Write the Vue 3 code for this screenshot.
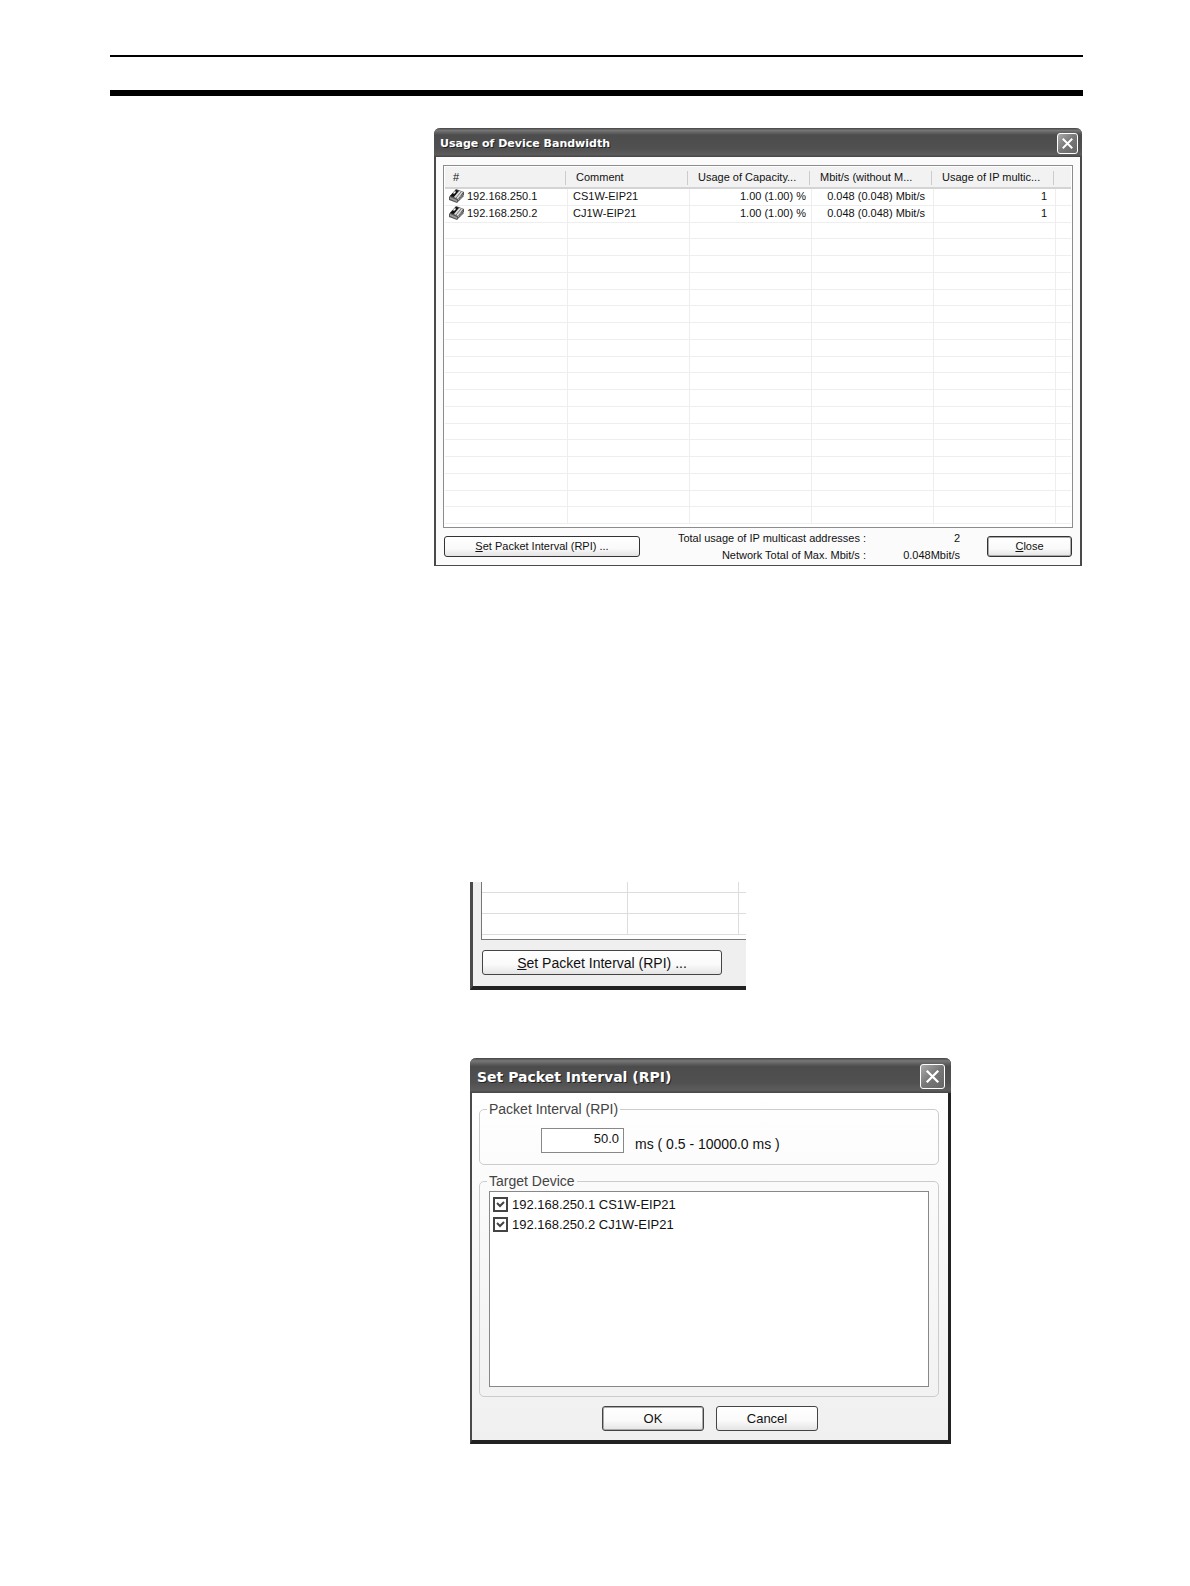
<template>
  <main class="page">
    <header class="page-head"></header>

    <section class="dialog usage">
      <div class="title-bar">
        <h2>Usage of Device Bandwidth</h2>
        <button type="button" class="close-btn" aria-label="Close window">
          <svg viewBox="0 0 20 20"><path d="M5 5 15 15M15 5 5 15" /></svg>
        </button>
      </div>

      <div class="usage-body">
        <div class="list-box">
          <table class="devices">
            <colgroup>
              <col class="col-first" />
              <col v-for="n in 4" :key="n" class="col-mid" />
              <col />
            </colgroup>
            <thead>
              <tr>
                <th v-for="(title, i) in headers" :key="i">{{ title }}</th>
              </tr>
            </thead>
            <tbody>
              <tr v-for="device in devices" :key="device.ip">
                <td class="ip">
                  <div class="ip-cell">
                    <svg class="device-icon" viewBox="0 0 16 14">
                      <path d="M0 8 7 0 15 3 15 7 8 14 0 11Z" fill="#555" />
                      <path d="M1 7 7 1 10 2 5 8Z" fill="#111" />
                      <path d="M5 8 10 2 14 3 9 10Z" fill="#ddd" />
                      <path d="M7 9 12 3" stroke="#777" />
                      <path d="M1 8 8 11 8 13 1 10Z" fill="#999" />
                      <path d="M4 4 6 2 7 3 5 5Z" fill="#fff" />
                      <path d="M9 13 15 6M9 11 14 5" stroke="#ccc" stroke-dasharray="1 1" />
                    </svg>
                    <span>{{ device.ip }}</span>
                  </div>
                </td>
                <td>{{ device.comment }}</td>
                <td class="num">{{ device.capacity }}</td>
                <td class="num rate">{{ device.rate }}</td>
                <td class="num last">{{ device.multicast }}</td>
                <td></td>
              </tr>
              <tr v-for="n in 18" :key="n">
                <td v-for="c in 6" :key="c"></td>
              </tr>
            </tbody>
          </table>
        </div>

        <div class="usage-foot">
          <button type="button" class="btn rpi-btn"><u>S</u>et Packet Interval (RPI) ...</button>
          <dl class="totals">
            <dt>Total usage of IP multicast addresses :</dt>
            <dd>2</dd>
            <dt>Network Total of Max. Mbit/s :</dt>
            <dd>0.048Mbit/s</dd>
          </dl>
          <button type="button" class="btn default close-text"><u>C</u>lose</button>
        </div>
      </div>
    </section>

    <section class="detail">
      <div class="detail-list">
        <table class="detail-grid">
          <colgroup>
            <col class="detail-first" />
            <col class="detail-second" />
            <col />
          </colgroup>
          <tbody>
            <tr v-for="n in 3" :key="n">
              <td v-for="c in 3" :key="c"></td>
            </tr>
          </tbody>
        </table>
      </div>
      <button type="button" class="btn large detail-btn"><u>S</u>et Packet Interval (RPI) ...</button>
    </section>

    <section class="dialog interval">
      <div class="title-bar">
        <h2>Set Packet Interval (RPI)</h2>
        <button type="button" class="close-btn" aria-label="Close window">
          <svg viewBox="0 0 20 20"><path d="M5 5 15 15M15 5 5 15" /></svg>
        </button>
      </div>

      <form class="interval-body" @submit.prevent>
        <fieldset class="group">
          <legend>Packet Interval (RPI)</legend>
          <div class="rpi-row">
            <input id="rpi" v-model="rpi" type="text" />
            <label for="rpi">ms ( 0.5 - 10000.0 ms )</label>
          </div>
        </fieldset>
        <fieldset class="group">
          <legend>Target Device</legend>
          <div class="targets">
            <label v-for="target in targets" :key="target.name" class="target">
              <input v-model="target.checked" type="checkbox" />
              <span>{{ target.name }}</span>
            </label>
          </div>
        </fieldset>
        <div class="actions">
          <button type="submit" class="btn large default">OK</button>
          <button type="button" class="btn large">Cancel</button>
        </div>
      </form>
    </section>
  </main>
</template>

<script setup>
import { ref } from "vue";

const headers = [
  "#",
  "Comment",
  "Usage of Capacity...",
  "Mbit/s (without M...",
  "Usage of IP multic...",
  "",
];

const devices = [
  {
    ip: "192.168.250.1",
    comment: "CS1W-EIP21",
    capacity: "1.00 (1.00) %",
    rate: "0.048 (0.048) Mbit/s",
    multicast: 1,
  },
  {
    ip: "192.168.250.2",
    comment: "CJ1W-EIP21",
    capacity: "1.00 (1.00) %",
    rate: "0.048 (0.048) Mbit/s",
    multicast: 1,
  },
];

const rpi = ref("50.0");
const targets = ref([
  { name: "192.168.250.1 CS1W-EIP21", checked: true },
  { name: "192.168.250.2 CJ1W-EIP21", checked: true },
]);
</script>

<style>
body {
  background: #fff;
}
</style>

<style scoped>
* {
  box-sizing: border-box;
}

.page {
  padding: 55px 107px 142px 110px;
  font-family: "Liberation Sans", Arial, sans-serif;
  font-size: 11px;
  color: #111;
}

.page-head {
  height: 41px;
  border-top: 2px solid #000;
  border-bottom: 6px solid #000;
}

/* dialogs */
.dialog {
  border: 2px solid #4a4a4a;
  border-top: none;
  border-radius: 6px 6px 0 0;
}

.usage {
  margin: 32px 1px 0 324px;
  border-bottom-width: 1px;
}

.title-bar {
  display: flex;
  align-items: center;
  justify-content: space-between;
  height: 29px;
  margin: 0 -2px;
  padding: 2px 4px 0 6px;
  border-radius: 6px 6px 0 0;
  background: linear-gradient(#444, #777 8%, #4c4c4c 24%, #505050 70%, #5c5c5c 92%, #444);
}

.title-bar h2 {
  margin: 0;
  font-family: "DejaVu Sans", Verdana, sans-serif;
  font-size: 11px;
  color: #fff;
  text-shadow: 1px 1px #222;
  white-space: nowrap;
}

.close-btn {
  width: 21px;
  height: 21px;
  padding: 0;
  border: 1px solid #fff;
  border-radius: 3px;
  background: linear-gradient(135deg, #aaa, #777 50%, #666);
}

.close-btn svg {
  display: block;
  width: 100%;
  height: 100%;
  fill: none;
  stroke: #fff;
  stroke-width: 2;
}

.usage-body {
  padding: 8px 7px 1px;
  background: #fbfbfb;
}

.list-box {
  padding: 1px 1px 3px;
  border: 1px solid #8c8c8c;
  background: #fff;
}

/* device table */
.devices {
  width: 100%;
  height: 357px;
  table-layout: fixed;
  border-collapse: separate;
  border-spacing: 0;
  line-height: 14px;
}

.col-first {
  width: 123px;
}

.col-mid {
  width: 122px;
}

.devices th {
  height: 22px;
  padding: 0 0 0 8px;
  border-bottom: 2px solid #d4d4d4;
  background: linear-gradient(#ccc, #ccc) calc(100% - 2px) 4px / 1px 14px no-repeat #f2f2f2;
  font-weight: normal;
  text-align: left;
  white-space: nowrap;
}

.devices th:last-child {
  background: #f2f2f2;
}

.devices td {
  height: 16px;
  padding: 0 5px;
  border-right: 1px solid #eee;
  border-bottom: 1px solid #eee;
  vertical-align: top;
  white-space: nowrap;
}

.devices td:last-child {
  border-right: none;
}

.devices .ip {
  padding: 0 4px;
}

.ip-cell {
  display: flex;
  align-items: center;
  gap: 2px;
}

.device-icon {
  width: 16px;
  height: 14px;
}

.devices .num {
  text-align: right;
}

.devices .rate,
.devices .last {
  padding-right: 8px;
}

/* buttons */
.btn {
  height: 21px;
  padding: 0;
  border: 1px solid #333;
  border-radius: 3px;
  background: linear-gradient(#fff, #fafafa 60%, #e4e4e4);
  color: #111;
  font-family: inherit;
  font-size: 11px;
  white-space: nowrap;
}

.btn.default {
  box-shadow: inset 0 0 0 1px #aaa;
}

.btn.large {
  height: 25px;
  border-color: #444;
  font-size: 14px;
}

.usage-foot {
  display: flex;
  align-items: center;
  padding: 0 1px;
}

.rpi-btn {
  width: 196px;
}

.totals {
  flex: 1;
  display: grid;
  grid-template-columns: 1fr 94px;
  margin: 2px 27px 0 0;
  line-height: 17px;
  text-align: right;
  white-space: nowrap;
}

.totals dd {
  margin: 0;
}

.close-text {
  width: 85px;
}

/* cut-out of the lower left corner of the window */
.detail {
  max-width: 276px;
  margin: 316px 0 0 360px;
  padding: 0 0 11px 8px;
  border-left: 3px solid #4a4a4a;
  border-bottom: 4px solid #222;
  background: #efefef;
}

.detail-list {
  margin-bottom: 10px;
  padding-bottom: 4px;
  border-left: 1px solid #777;
  border-bottom: 1px solid #777;
  background: #fff;
}

.detail-grid {
  width: 100%;
  height: 53px;
  table-layout: fixed;
  border-collapse: separate;
  border-spacing: 0;
}

.detail-first {
  width: 146px;
}

.detail-second {
  width: 111px;
}

.detail-grid td {
  height: 21px;
  padding: 0;
  border-right: 1px solid #ddd;
  border-bottom: 1px solid #ddd;
}

.detail-grid td:last-child {
  border-right: none;
}

.detail-grid tr:first-child td {
  height: 11px;
}

.detail-btn {
  display: block;
  width: 240px;
  margin-left: 1px;
}

/* packet interval dialog */
.interval {
  max-width: 481px;
  margin: 68px 0 0 360px;
  border-right: 3px solid #222;
  border-bottom: 4px solid #222;
}

.interval .title-bar {
  height: 35px;
  margin-right: -3px;
  padding: 2px 6px 0 7px;
}

.interval .title-bar h2 {
  font-size: 14px;
}

.interval .close-btn {
  width: 25px;
  height: 25px;
}

.interval-body {
  padding: 8px 9px 9px 7px;
  background: linear-gradient(#fff, #fafafa 30%, #f0f0f0);
  font-size: 14px;
}

.group {
  min-width: 0;
  margin: 0 0 8px;
  padding: 2px 9px 9px;
  border: 1px solid #ccc;
  border-radius: 5px;
}

.group legend {
  padding: 0 2px;
  margin-left: -2px;
  line-height: 16px;
  color: #444;
}

.rpi-row {
  display: flex;
  align-items: center;
  gap: 11px;
  padding: 9px 0 2px 52px;
}

.rpi-row input {
  width: 83px;
  height: 25px;
  padding: 0 4px 4px;
  border: 1px solid #888;
  background: #fff;
  color: #111;
  font-family: inherit;
  font-size: 13px;
  text-align: right;
}

.rpi-row label {
  padding-top: 6px;
}

.targets {
  height: 196px;
  padding: 2px 3px;
  border: 1px solid #888;
  background: #fff;
}

.target {
  display: flex;
  align-items: center;
  gap: 4px;
  height: 20px;
  font-size: 13px;
}

.target input {
  appearance: none;
  width: 15px;
  height: 15px;
  margin: 0;
  border: 2px solid #444;
  background: #fff;
}

.target input:checked {
  background: url("data:image/svg+xml,%3Csvg xmlns='http://www.w3.org/2000/svg' viewBox='0 0 11 11'%3E%3Cpath d='M2 4 5 7 9 3' fill='none' stroke='%23444' stroke-width='2'/%3E%3C/svg%3E") #fff;
}

.actions {
  display: flex;
  justify-content: center;
  gap: 12px;
  padding: 1px 0 0 2px;
}

.actions .btn {
  width: 102px;
  font-size: 13px;
}
</style>
